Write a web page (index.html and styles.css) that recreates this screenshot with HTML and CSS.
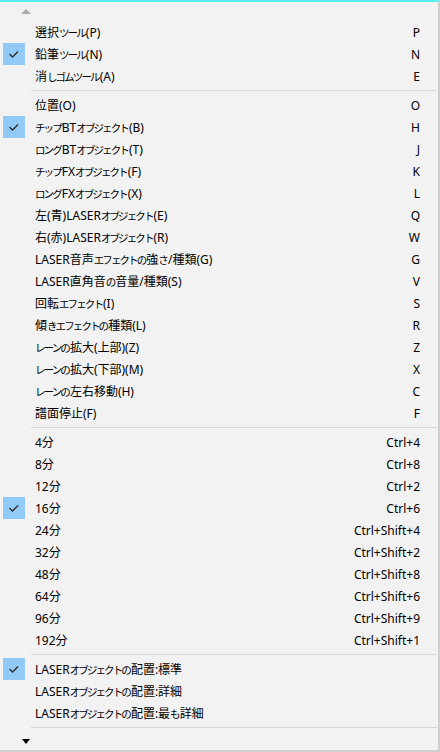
FILE: index.html
```html
<!DOCTYPE html>
<html lang="ja">
<head>
<meta charset="utf-8">
<link rel="stylesheet" href="styles.css">
</head>
<body>
<div class="menu">
  <div class="scroll top"><span class="arrow up"></span></div>
  <div class="items">
    <div class="row"><span class="gut"></span><span class="label">選択<span class="k">ツール</span>(P)</span><span class="key">P</span></div>
    <div class="row"><span class="gut"><span class="check"><svg width="22" height="22" viewBox="0 0 22 22"><polyline points="6.5,11 9.5,14 15,8.5" fill="none" stroke="#2b2b2b" stroke-width="1.3"/></svg></span></span><span class="label">鉛筆<span class="k">ツール</span>(N)</span><span class="key">N</span></div>
    <div class="row"><span class="gut"></span><span class="label">消<span class="k">しゴムツール</span>(A)</span><span class="key">E</span></div>
    <div class="sep"></div>
    <div class="row"><span class="gut"></span><span class="label">位置(O)</span><span class="key">O</span></div>
    <div class="row"><span class="gut"><span class="check"><svg width="22" height="22" viewBox="0 0 22 22"><polyline points="6.5,11 9.5,14 15,8.5" fill="none" stroke="#2b2b2b" stroke-width="1.3"/></svg></span></span><span class="label"><span class="k">チップ</span>BT<span class="k">オブジェクト</span>(B)</span><span class="key">H</span></div>
    <div class="row"><span class="gut"></span><span class="label"><span class="k">ロング</span>BT<span class="k">オブジェクト</span>(T)</span><span class="key">J</span></div>
    <div class="row"><span class="gut"></span><span class="label"><span class="k">チップ</span>FX<span class="k">オブジェクト</span>(F)</span><span class="key">K</span></div>
    <div class="row"><span class="gut"></span><span class="label"><span class="k">ロング</span>FX<span class="k">オブジェクト</span>(X)</span><span class="key">L</span></div>
    <div class="row"><span class="gut"></span><span class="label">左(青)LASER<span class="k">オブジェクト</span>(E)</span><span class="key">Q</span></div>
    <div class="row"><span class="gut"></span><span class="label">右(赤)LASER<span class="k">オブジェクト</span>(R)</span><span class="key">W</span></div>
    <div class="row"><span class="gut"></span><span class="label">LASER音声<span class="k">エフェクトの</span>強<span class="k">さ</span>/種類(G)</span><span class="key">G</span></div>
    <div class="row"><span class="gut"></span><span class="label">LASER直角音<span class="k">の</span>音量/種類(S)</span><span class="key">V</span></div>
    <div class="row"><span class="gut"></span><span class="label">回転<span class="k">エフェクト</span>(I)</span><span class="key">S</span></div>
    <div class="row"><span class="gut"></span><span class="label">傾<span class="k">きエフェクトの</span>種類(L)</span><span class="key">R</span></div>
    <div class="row"><span class="gut"></span><span class="label"><span class="k">レーンの</span>拡大(上部)(Z)</span><span class="key">Z</span></div>
    <div class="row"><span class="gut"></span><span class="label"><span class="k">レーンの</span>拡大(下部)(M)</span><span class="key">X</span></div>
    <div class="row"><span class="gut"></span><span class="label"><span class="k">レーンの</span>左右移動(H)</span><span class="key">C</span></div>
    <div class="row"><span class="gut"></span><span class="label">譜面停止(F)</span><span class="key">F</span></div>
    <div class="sep"></div>
    <div class="row"><span class="gut"></span><span class="label">4分</span><span class="key">Ctrl+4</span></div>
    <div class="row"><span class="gut"></span><span class="label">8分</span><span class="key">Ctrl+8</span></div>
    <div class="row"><span class="gut"></span><span class="label">12分</span><span class="key">Ctrl+2</span></div>
    <div class="row"><span class="gut"><span class="check"><svg width="22" height="22" viewBox="0 0 22 22"><polyline points="6.5,11 9.5,14 15,8.5" fill="none" stroke="#2b2b2b" stroke-width="1.3"/></svg></span></span><span class="label">16分</span><span class="key">Ctrl+6</span></div>
    <div class="row"><span class="gut"></span><span class="label">24分</span><span class="key">Ctrl+Shift+4</span></div>
    <div class="row"><span class="gut"></span><span class="label">32分</span><span class="key">Ctrl+Shift+2</span></div>
    <div class="row"><span class="gut"></span><span class="label">48分</span><span class="key">Ctrl+Shift+8</span></div>
    <div class="row"><span class="gut"></span><span class="label">64分</span><span class="key">Ctrl+Shift+6</span></div>
    <div class="row"><span class="gut"></span><span class="label">96分</span><span class="key">Ctrl+Shift+9</span></div>
    <div class="row"><span class="gut"></span><span class="label">192分</span><span class="key">Ctrl+Shift+1</span></div>
    <div class="sep"></div>
    <div class="row"><span class="gut"><span class="check"><svg width="22" height="22" viewBox="0 0 22 22"><polyline points="6.5,11 9.5,14 15,8.5" fill="none" stroke="#2b2b2b" stroke-width="1.3"/></svg></span></span><span class="label">LASER<span class="k">オブジェクトの</span>配置:標準</span><span class="key"></span></div>
    <div class="row"><span class="gut"></span><span class="label">LASER<span class="k">オブジェクトの</span>配置:詳細</span><span class="key"></span></div>
    <div class="row"><span class="gut"></span><span class="label">LASER<span class="k">オブジェクトの</span>配置:最<span class="k">も</span>詳細</span><span class="key"></span></div>
    <div class="sep"></div>
  </div>
  <div class="scroll bottom"><span class="arrow down"></span></div>
</div>
</body>
</html>
```

FILE: styles.css
```css
html, body {
  margin: 0;
  padding: 0;
  background: #f2f2f2;
}
.menu {
  box-sizing: border-box;
  width: 440px;
  height: 752px;
  background: #f2f2f2;
  border-top: 2px solid #55f0f0;
  border-right: 2px solid #cfcfcf;
  border-bottom: 2px solid #cfcfcf;
  display: flex;
  flex-direction: column;
  font-family: "Noto Sans", "Noto Sans CJK JP", sans-serif;
  font-size: 12px;
  color: #000;
}
.scroll {
  height: 19px;
  display: flex;
  align-items: center;
  padding-left: 21px;
}
.scroll.bottom {
  flex: 1;
  padding-left: 22px;
}
.arrow {
  width: 0;
  height: 0;
  border-left: 5px solid transparent;
  border-right: 5px solid transparent;
}
.arrow.up {
  border-bottom: 5px solid #a8a8a8;
  margin-top: -1px;
}
.arrow.down {
  border-left-width: 4px;
  border-right-width: 4px;
  border-top: 5px solid #000;
  margin-top: 2px;
}
.items {
  display: flex;
  flex-direction: column;
}
.row {
  height: 22px;
  display: flex;
  align-items: center;
}
.gut {
  width: 35px;
  height: 22px;
  flex: none;
  display: flex;
  align-items: center;
}
.check {
  width: 22px;
  height: 22px;
  margin-left: 3px;
  background: #91c9f7;
  display: block;
}
.check svg {
  display: block;
}
.label {
  flex: 1;
  white-space: nowrap;
}
.k {
  font-size: 10.5px;
  letter-spacing: -1.9px;
  padding-right: 1px;
}
.key {
  padding-right: 18px;
  white-space: nowrap;
}
.sep {
  height: 7px;
  display: flex;
  align-items: center;
  padding-left: 31px;
  padding-right: 1px;
}
.sep::before {
  content: "";
  display: block;
  flex: 1;
  height: 1px;
  background: #d7d7d7;
}
```
